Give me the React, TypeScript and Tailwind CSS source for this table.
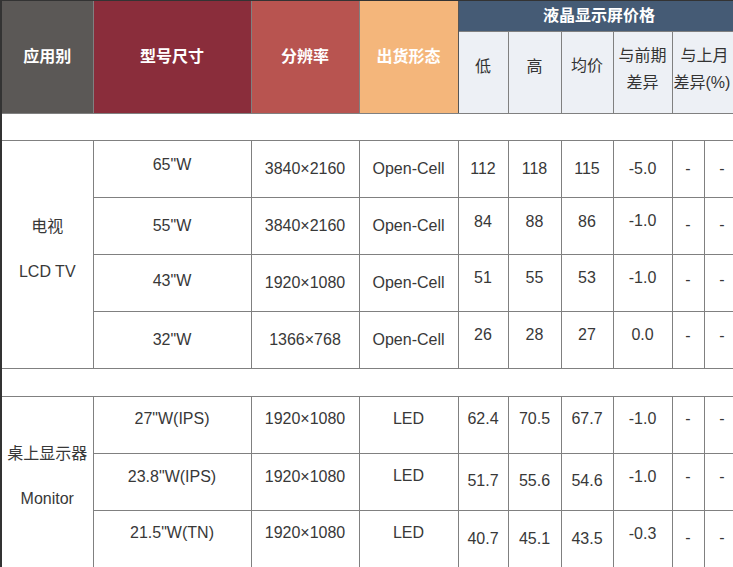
const FONT = "font-['Liberation_Sans','Noto_Sans_CJK_SC',sans-serif]";

type Row = {
  cells: string[];
  pads: string[];
};

/* cells: size, resolution, form, low, high, avg, diff, dash, dash
   pads nudge text up the way the source page sits it in each cell */
const TV: Row[] = [
  {
    cells: ['65"W', "3840×2160", "Open-Cell", "112", "118", "115", "-5.0", "-", "-"],
    pads: ["pb-[7px]", "", "", "", "", "", "", "", ""],
  },
  {
    cells: ['55"W', "3840×2160", "Open-Cell", "84", "88", "86", "-1.0", "-", "-"],
    pads: ["", "", "", "pb-[8px]", "pb-[8px]", "pb-[8px]", "pb-[9px]", "pb-[2px]", "pb-[2px]"],
  },
  {
    cells: ['43"W', "1920×1080", "Open-Cell", "51", "55", "53", "-1.0", "-", "-"],
    pads: ["pb-[3px]", "", "", "pb-[9px]", "pb-[9px]", "pb-[9px]", "pb-[9px]", "pb-[5px]", "pb-[5px]"],
  },
  {
    cells: ['32"W', "1366×768", "Open-Cell", "26", "28", "27", "0.0", "-", "-"],
    pads: ["", "", "", "pb-[9px]", "pb-[9px]", "pb-[9px]", "pb-[9px]", "pb-[8px]", "pb-[8px]"],
  },
];

const MONITOR: Row[] = [
  {
    cells: ['27"W(IPS)', "1920×1080", "LED", "62.4", "70.5", "67.7", "-1.0", "-", "-"],
    pads: ["pb-[11px]", "pb-[11px]", "pb-[11px]", "pb-[11px]", "pb-[11px]", "pb-[11px]", "pb-[11px]", "pb-[11px]", "pb-[11px]"],
  },
  {
    cells: ['23.8"W(IPS)', "1920×1080", "LED", "51.7", "55.6", "54.6", "-1.0", "-", "-"],
    pads: ["pb-[10px]", "pb-[10px]", "pb-[11px]", "pb-[2px]", "pb-[2px]", "pb-[2px]", "pb-[10px]", "pb-[9px]", "pb-[9px]"],
  },
  {
    cells: ['21.5"W(TN)', "1920×1080", "LED", "40.7", "45.1", "43.5", "-0.3", "-", "-"],
    pads: ["pb-[11px]", "pb-[11px]", "pb-[11px]", "", "", "", "pb-[10px]", "pb-[2px]", "pb-[2px]"],
  },
];

const cell = "border border-[#808080] text-center align-middle text-[16px] text-[#383838] p-0";

function Group({ rows, zh, en }: { rows: Row[]; zh: string; en: string }) {
  return (
    <>
      {rows.map((r, i) => (
        <tr key={i} className="h-[57px]">
          {i === 0 && (
            <td rowSpan={rows.length} className={`${cell} border-l-0 pb-[10px]`}>
              <div className="flex flex-col items-center gap-[27px] leading-[18px]">
                <span>{zh}</span>
                <span>{en}</span>
              </div>
            </td>
          )}
          {r.cells.map((c, j) => (
            <td key={j} className={`${cell} ${r.pads[j]}`}>
              {c}
            </td>
          ))}
        </tr>
      ))}
    </>
  );
}

function Spacer({ h }: { h: string }) {
  return (
    <tr className={h}>
      <td colSpan={10} className="border border-l-0 border-[#808080] p-0" />
    </tr>
  );
}

export default function App() {
  const head = "border border-[#808080] border-t-0 text-center align-middle text-[16px] font-bold text-white p-0";
  const sub = "border border-[#808080] bg-[#edf0f5] text-center align-middle text-[16px] text-[#333] p-0";

  return (
    <div className={`w-[733px] h-[567px] overflow-hidden bg-white ${FONT}`}>
      <div className="w-[742px] border-t border-l-2 border-[#333]">
        <table className="w-[738px] table-fixed border-collapse">
          <colgroup>
            <col className="w-[91px]" />
            <col className="w-[158px]" />
            <col className="w-[108px]" />
            <col className="w-[99px]" />
            <col className="w-[50px]" />
            <col className="w-[53px]" />
            <col className="w-[52px]" />
            <col className="w-[59px]" />
            <col className="w-[32px]" />
            <col className="w-[36px]" />
          </colgroup>
          <thead>
            <tr className="h-[30px]">
              <th rowSpan={2} className={`${head} border-l-0 bg-[#5b5856]`}>应用别</th>
              <th rowSpan={2} className={`${head} bg-[#8a2d3b]`}>型号尺寸</th>
              <th rowSpan={2} className={`${head} bg-[#b85450]`}>分辨率</th>
              <th rowSpan={2} className={`${head} bg-[#f4b67b] border-r-[#555]`}>出货形态</th>
              <th colSpan={6} className={`${head} bg-[#455b75]`}>液晶显示屏价格</th>
            </tr>
            <tr className="h-[82px]">
              <th className={`${sub} font-normal pb-[10px]`}>低</th>
              <th className={`${sub} font-normal pb-[10px]`}>高</th>
              <th className={`${sub} font-normal pb-[12px]`}>均价</th>
              <th className={`${sub} font-normal leading-[27px] pb-[6px]`}>
                与前期
                <br />
                差异
              </th>
              <th colSpan={2} className={`${sub} font-normal leading-[27px] pb-[6px] whitespace-nowrap text-left pl-[1px]`}>
                <span className="pl-[7px]">与上月</span>
                <br />
                差异(%)
              </th>
            </tr>
          </thead>
          <tbody>
            <Spacer h="h-[27px]" />
            <Group rows={TV} zh="电视" en="LCD TV" />
            <Spacer h="h-[28px]" />
            <Group rows={MONITOR} zh="桌上显示器" en="Monitor" />
          </tbody>
        </table>
      </div>
    </div>
  );
}
